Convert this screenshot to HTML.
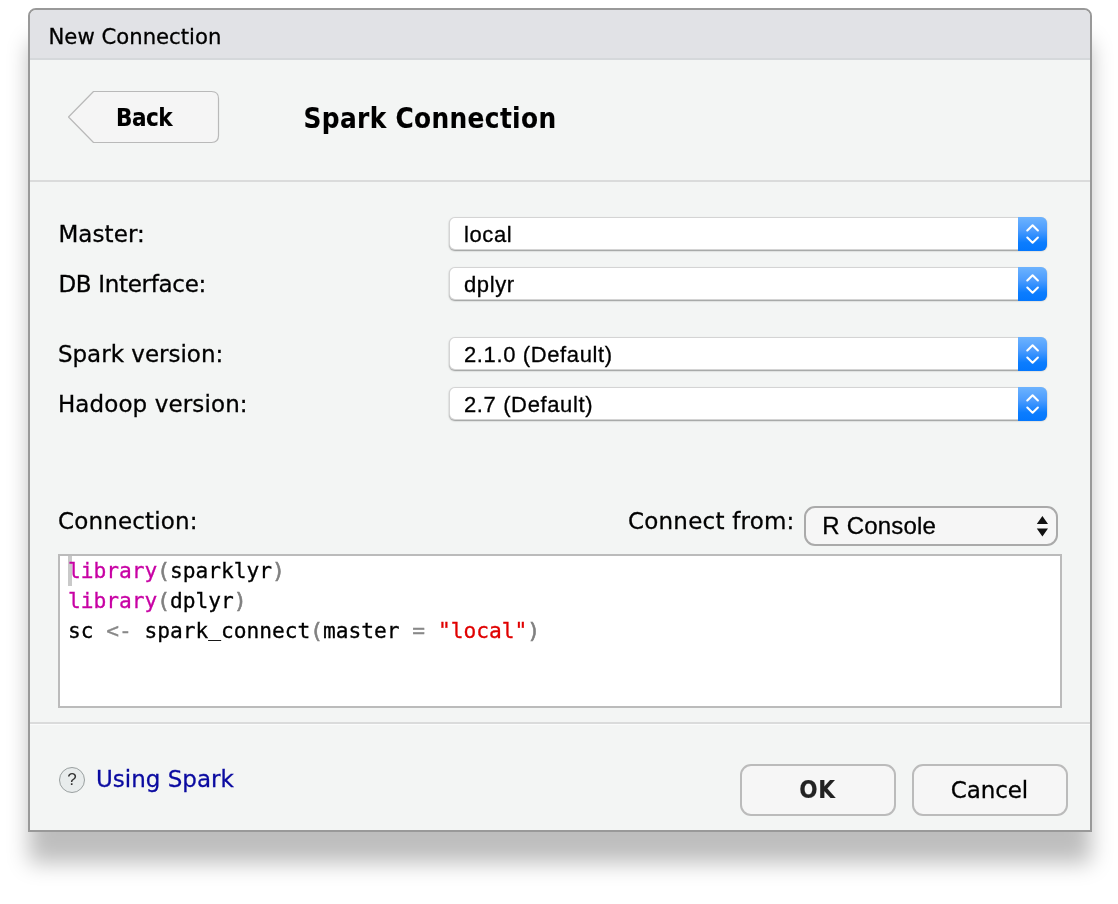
<!DOCTYPE html>
<html lang="en">
<head>
<meta charset="utf-8">
<title>New Connection</title>
<style>
html,body{margin:0;padding:0;background:#fff;}
body{-webkit-text-stroke:0.3px currentColor;width:1118px;height:904px;position:relative;overflow:hidden;font-family:"DejaVu Sans","Liberation Sans",sans-serif;color:#000;}
.abs{position:absolute;white-space:nowrap;}
#dlg{position:absolute;left:28px;top:8px;width:1060px;height:820px;border:2px solid #999;border-radius:8px 8px 0 0;background:#f3f5f4;box-shadow:0 32px 22px -1px rgba(0,0,0,0.26);}
#tbar{position:absolute;left:30px;top:10px;width:1060px;height:48px;background:#e1e2e6;border-bottom:2px solid #d5d8db;border-radius:6px 6px 0 0;}
.lbl{font-size:23px;line-height:30px;}
.sep{position:absolute;left:30px;width:1060px;height:2px;background:#dadbdb;}
.sel{position:absolute;left:449px;width:598px;height:33px;border-radius:6px;background:#fff;box-shadow:0 0 0 1px rgba(0,0,0,0.17) inset,0 1px 1.5px 0 rgba(0,0,0,0.38);}
.sel .cap{position:absolute;right:0;top:0;width:29px;height:33.6px;border-radius:0 6px 6px 0;overflow:hidden;background:linear-gradient(#6db3fe 0%,#4a9bfe 40%,#0c7dfe 75%,#0477fd 100%);}
.sel .txt{position:absolute;left:15px;top:0;font-family:"Liberation Sans",sans-serif;font-size:22px;line-height:35px;letter-spacing:0.62px;}
.btn{position:absolute;box-sizing:border-box;border:2px solid #bbb;border-radius:11px;background:#f6f6f6;text-align:center;font-size:23px;}
#code{position:absolute;left:58px;top:554px;width:1000px;height:150px;border:2px solid #bbb;background:#fff;}
.cl{position:absolute;left:67.9px;font-family:"DejaVu Sans Mono","Liberation Mono",monospace;font-size:21.2px;line-height:30px;white-space:pre;}
.kw{color:#c800a4;}
.pa{color:#808080;-webkit-text-stroke:0.6px #808080;}
.st{color:#e00000;}
.op{color:#888;}
</style>
</head>
<body>
<div id="wrap" style="position:absolute;left:0;top:0;width:1118px;height:904px;will-change:transform;">
<div id="dlg"></div>
<div id="tbar"></div>
<div class="abs" style="left:48.5px;top:21.5px;font-size:21.2px;line-height:30px;">New Connection</div>

<!-- Back button -->
<svg class="abs" style="left:66px;top:89px;" width="156" height="56" viewBox="66 89 156 56">
  <path d="M68.5 117 L93.5 91.5 L211.5 91.5 Q218.5 91.5 218.5 98.5 L218.5 135.5 Q218.5 142.5 211.5 142.5 L93.5 142.5 Z" fill="#f5f5f5" stroke="#b9b9b9" stroke-width="1.2" stroke-linejoin="round"/>
</svg>
<div class="abs" style="left:116px;top:102.8px;font-family:'DejaVu Sans Condensed','DejaVu Sans',sans-serif;font-weight:bold;font-size:24px;line-height:30px;letter-spacing:-0.55px;-webkit-text-stroke:0.12px #000;">Back</div>
<div class="abs" style="left:303.6px;top:102.8px;font-family:'DejaVu Sans Condensed','DejaVu Sans',sans-serif;font-weight:bold;font-size:27.6px;line-height:32px;letter-spacing:0.36px;-webkit-text-stroke:0.1px #000;">Spark Connection</div>

<div class="sep" style="top:180px;"></div>

<div class="abs lbl" style="left:58.4px;top:218.6px;letter-spacing:0.08px;">Master:</div>
<div class="abs lbl" style="left:58.4px;top:268.6px;letter-spacing:-0.3px;">DB Interface:</div>
<div class="abs lbl" style="left:57.9px;top:339px;">Spark version:</div>
<div class="abs lbl" style="left:57.9px;top:389px;letter-spacing:0.12px;">Hadoop version:</div>

<div class="sel" style="top:217px;"><span class="txt">local</span><span class="cap"><svg width="29" height="33" viewBox="1018 217 29 33" style="position:absolute;left:0;top:0"><path d="M1027.3 230.4 L1032.6 225.3 L1037.9 230.4 M1027.3 237.6 L1032.6 242.7 L1037.9 237.6" fill="none" stroke="#fff" stroke-width="2.1" stroke-linecap="round" stroke-linejoin="round"/></svg></span></div>
<div class="sel" style="top:267px;"><span class="txt">dplyr</span><span class="cap"><svg width="29" height="33" viewBox="1018 217 29 33" style="position:absolute;left:0;top:0"><path d="M1027.3 230.4 L1032.6 225.3 L1037.9 230.4 M1027.3 237.6 L1032.6 242.7 L1037.9 237.6" fill="none" stroke="#fff" stroke-width="2.1" stroke-linecap="round" stroke-linejoin="round"/></svg></span></div>
<div class="sel" style="top:337px;"><span class="txt">2.1.0 (Default)</span><span class="cap"><svg width="29" height="33" viewBox="1018 217 29 33" style="position:absolute;left:0;top:0"><path d="M1027.3 230.4 L1032.6 225.3 L1037.9 230.4 M1027.3 237.6 L1032.6 242.7 L1037.9 237.6" fill="none" stroke="#fff" stroke-width="2.1" stroke-linecap="round" stroke-linejoin="round"/></svg></span></div>
<div class="sel" style="top:387px;"><span class="txt">2.7 (Default)</span><span class="cap"><svg width="29" height="33" viewBox="1018 217 29 33" style="position:absolute;left:0;top:0"><path d="M1027.3 230.4 L1032.6 225.3 L1037.9 230.4 M1027.3 237.6 L1032.6 242.7 L1037.9 237.6" fill="none" stroke="#fff" stroke-width="2.1" stroke-linecap="round" stroke-linejoin="round"/></svg></span></div>

<div class="abs lbl" style="left:58px;top:505.6px;letter-spacing:0.17px;">Connection:</div>
<div class="abs lbl" style="left:628px;top:505.8px;letter-spacing:0.22px;">Connect from:</div>

<div class="btn" style="left:804px;top:506px;width:254px;height:40px;border-color:#aaa;"></div>
<div class="abs" style="left:822.3px;top:511px;font-family:'Liberation Sans',sans-serif;font-size:24px;line-height:30px;letter-spacing:0.2px;">R Console</div>

<svg class="abs" style="left:1034px;top:514px;" width="18" height="26" viewBox="1034 514 18 26"><path d="M1036.8 524 L1042.4 516 L1048 524 Z M1036.8 528.6 L1042.4 536.6 L1048 528.6 Z" fill="#111"/></svg>
<div id="code"></div>
<div class="abs" style="left:68.2px;top:556px;width:3.7px;height:30px;background:#c9c9c9;"></div>
<div class="cl" style="top:556px;"><span class="kw">library</span><span class="pa">(</span>sparklyr<span class="pa">)</span></div>
<div class="cl" style="top:586px;"><span class="kw">library</span><span class="pa">(</span>dplyr<span class="pa">)</span></div>
<div class="cl" style="top:616px;">sc <span class="op">&lt;-</span> spark<span style="position:relative;top:-2.5px">_</span>connect<span class="pa">(</span>master <span class="op">=</span> <span class="st">"local"</span><span class="pa">)</span></div>

<div class="sep" style="top:722px;box-shadow:0 1px 0 #fafbfb;"></div>

<div class="abs" style="left:59px;top:767px;width:24px;height:24px;border:1px solid #9aa0a0;border-radius:50%;background:#e8ecec;"></div>
<div class="abs" style="left:59px;top:767px;width:26px;text-align:center;font-family:'Liberation Sans',sans-serif;font-size:17px;line-height:26px;color:#333;-webkit-text-stroke:0;">?</div>
<div class="abs lbl" style="left:96px;top:764.4px;color:#0a0aa0;">Using Spark</div>

<div class="btn" style="left:740px;top:764px;width:156px;height:51.6px;"></div>
<div class="btn" style="left:912px;top:764px;width:156px;height:51.6px;"></div>
<div class="abs" style="left:740px;top:775px;width:155px;text-align:center;font-family:'DejaVu Sans Condensed','DejaVu Sans',sans-serif;font-weight:bold;font-size:24px;line-height:30px;letter-spacing:0.6px;color:#222;-webkit-text-stroke:0.12px #222;">OK</div>
<div class="abs lbl" style="left:912px;top:775px;width:155px;text-align:center;letter-spacing:-0.1px;">Cancel</div>
</div>
</body>
</html>
